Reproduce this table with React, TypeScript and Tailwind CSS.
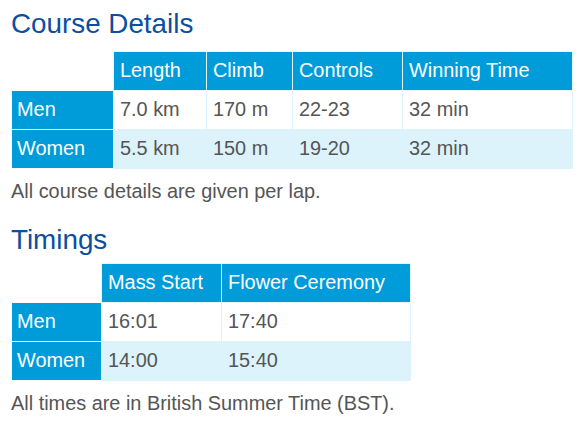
const courseRows = [
  { label: 'Men', cells: ['7.0 km', '170 m', '22-23', '32 min'] },
  { label: 'Women', cells: ['5.5 km', '150 m', '19-20', '32 min'] },
]

const timingRows = [
  { label: 'Men', cells: ['16:01', '17:40'] },
  { label: 'Women', cells: ['14:00', '15:40'] },
]

type Row = { label: string, cells: string[] }

const DataTable = ({ heads, widths, rows, className }: { heads: string[], widths: string[], rows: Row[], className: string }) => {
  return (
    <table className={`table-fixed border-collapse ${className}`}>
      <colgroup>
        {widths.map((w, i) => (
          <col key={i} className={w} />
        ))}
      </colgroup>
      <thead>
        <tr className="h-[39px]">
          <th className="p-0"></th>
          {heads.map((h) => (
            <th key={h} className="border border-[#e6f6fd] bg-[#009bd9] px-[6px] text-left font-normal text-white">
              {h}
            </th>
          ))}
        </tr>
      </thead>
      <tbody>
        {rows.map((row, idx) => (
          <tr key={row.label} className={`h-[39px] ${idx % 2 === 1 ? 'bg-[#dcf3fc]' : 'bg-white'}`}>
            <th className="border border-white bg-[#009bd9] px-[5px] text-left font-normal text-white">{row.label}</th>
            {row.cells.map((c, i) => (
              <td key={i} className="border border-[#dcf3fc] px-[6px] text-[#555555]">
                {c}
              </td>
            ))}
          </tr>
        ))}
      </tbody>
    </table>
  )
}

export default function App() {
  return (
    <div className="min-h-[422px] bg-white px-[11px] pt-[7px] text-[19.9px] leading-[1.4] font-['Liberation_Sans',Arial,sans-serif]">
      <h2 className="text-[27.8px] leading-[1.2] font-normal text-[#0b4fa0]">Course Details</h2>
      <DataTable
        className="mt-[11px] w-full"
        heads={['Length', 'Climb', 'Controls', 'Winning Time']}
        widths={['w-[102px]', 'w-[93px]', 'w-[86px]', 'w-[110px]', 'w-[170px]']}
        rows={courseRows}
      />
      <p className="mt-[9px] text-[#555555]">All course details are given per lap.</p>

      <h2 className="mt-[17px] text-[27.8px] leading-[1.2] font-normal text-[#0b4fa0]">Timings</h2>
      <DataTable
        className="mt-[6px] w-[399px]"
        heads={['Mass Start', 'Flower Ceremony']}
        widths={['w-[90px]', 'w-[120px]', 'w-[189px]']}
        rows={timingRows}
      />
      <p className="mt-[9px] text-[#555555]">All times are in British Summer Time (BST).</p>
    </div>
  )
}
